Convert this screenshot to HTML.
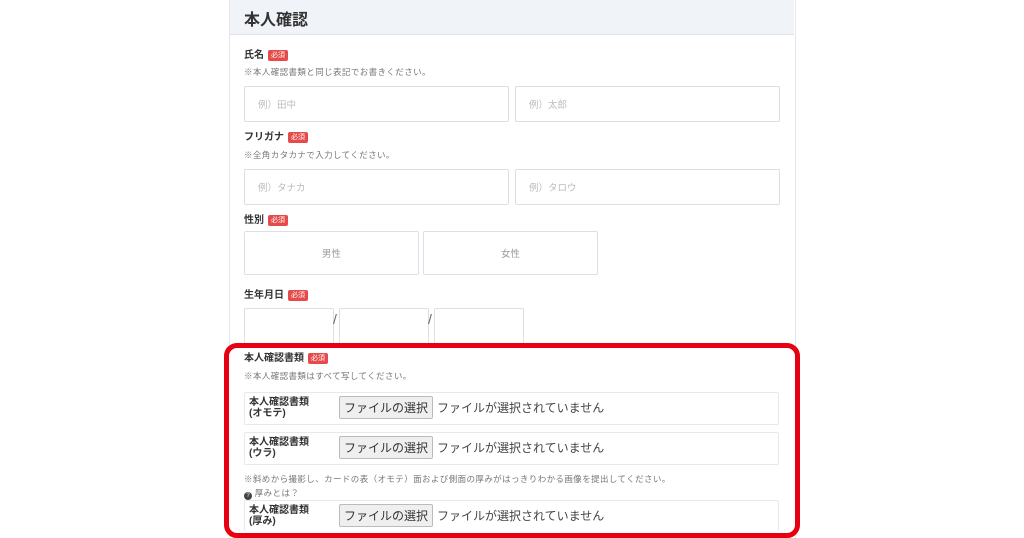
<!DOCTYPE html>
<html><head><meta charset="utf-8"><style>
html,body{margin:0;width:1024px;height:538px;overflow:hidden}
body{background:#fff;position:relative;font-family:"Liberation Sans","Noto Sans CJK JP",sans-serif;color:#333}
.a{position:absolute}
.card{left:229px;top:-2px;width:565px;height:560px;border:1px solid #e3e6ea;background:#fff}
.hd{left:230px;top:0;width:564px;height:34px;background:#f0f3f8;border-bottom:1px solid #dde2ea}
.lbl{font-size:10px;font-weight:bold;color:#333;line-height:12px}
.req{display:inline-block;background:#e54b4b;color:#fff;font-size:7px;padding:1px 3px;border-radius:2px;margin-left:4px;vertical-align:1px;font-weight:normal;line-height:9px}
.note{font-size:8.5px;color:#777;line-height:10px;letter-spacing:0.4px}
.in{border:1px solid #dcdfe3;border-radius:2px;background:#fff;font-size:9.5px;color:#bbb;box-sizing:border-box}
.ph{padding-left:13px;display:flex;align-items:center}
.g{display:flex;align-items:center;justify-content:center;color:#999}
.fr{left:244px;width:535px;height:33px;border:1px solid #e6e8eb;box-sizing:border-box;border-radius:2px}
.fl{left:4px;top:4px;font-size:10px;font-weight:bold;line-height:11px;color:#333}
.btn{left:94px;top:3px;width:94px;height:23px;background:#efefef;border:1px solid #bbb;border-radius:2px;box-sizing:border-box;font-size:12px;color:#333;display:flex;align-items:center;justify-content:center}
.ft{left:192px;top:6px;font-size:12px;color:#444}
</style></head><body>
<div class="a card"></div>
<div class="a hd"></div>
<div class="a" style="left:244px;top:6px;font-size:16px;font-weight:bold;color:#333">本人確認</div>

<div class="a lbl" style="left:244px;top:50px">氏名<span class="req">必須</span></div>
<div class="a note" style="left:244px;top:67px">※本人確認書類と同じ表記でお書きください。</div>
<div class="a in ph" style="left:244px;top:86px;width:265px;height:36px">例）田中</div>
<div class="a in ph" style="left:515px;top:86px;width:265px;height:36px">例）太郎</div>

<div class="a lbl" style="left:244px;top:132px">フリガナ<span class="req">必須</span></div>
<div class="a note" style="left:244px;top:150px">※全角カタカナで入力してください。</div>
<div class="a in ph" style="left:244px;top:169px;width:265px;height:36px">例）タナカ</div>
<div class="a in ph" style="left:515px;top:169px;width:265px;height:36px">例）タロウ</div>

<div class="a lbl" style="left:244px;top:215px">性別<span class="req">必須</span></div>
<div class="a in g" style="left:244px;top:231px;width:175px;height:44px">男性</div>
<div class="a in g" style="left:423px;top:231px;width:175px;height:44px">女性</div>

<div class="a lbl" style="left:244px;top:290px">生年月日<span class="req">必須</span></div>
<div class="a in" style="left:244px;top:308px;width:90px;height:40px"></div>
<div class="a in" style="left:339px;top:308px;width:90px;height:40px"></div>
<div class="a in" style="left:434px;top:308px;width:90px;height:40px"></div>
<div class="a" style="left:333px;top:311px;font-size:14px;color:#666">/</div>
<div class="a" style="left:428px;top:311px;font-size:14px;color:#666">/</div>

<div class="a" style="left:224px;top:343px;width:576px;height:195px;border:5px solid #e60012;border-radius:13px;box-sizing:border-box;background:#fff"></div>
<div class="a lbl" style="left:244px;top:353px">本人確認書類<span class="req">必須</span></div>
<div class="a note" style="left:244px;top:371px">※本人確認書類はすべて写してください。</div>

<div class="a fr" style="top:392px"><div class="a fl">本人確認書類<br>(オモテ)</div><div class="a btn">ファイルの選択</div><div class="a ft">ファイルが選択されていません</div></div>
<div class="a fr" style="top:432px"><div class="a fl">本人確認書類<br>(ウラ)</div><div class="a btn">ファイルの選択</div><div class="a ft">ファイルが選択されていません</div></div>
<div class="a note" style="left:244px;top:474px">※斜めから撮影し、カードの表（オモテ）面および側面の厚みがはっきりわかる画像を提出してください。</div>
<div class="a note" style="left:244px;top:488px"><span style="display:inline-block;width:8px;height:8px;border-radius:50%;background:#444;color:#fff;font-size:6px;text-align:center;line-height:8px;vertical-align:-1px;letter-spacing:0">?</span> 厚みとは？</div>
<div class="a fr" style="top:500px;height:31px;border-bottom:none"><div class="a fl">本人確認書類<br>(厚み)</div><div class="a btn">ファイルの選択</div><div class="a ft">ファイルが選択されていません</div></div>
</body></html>
